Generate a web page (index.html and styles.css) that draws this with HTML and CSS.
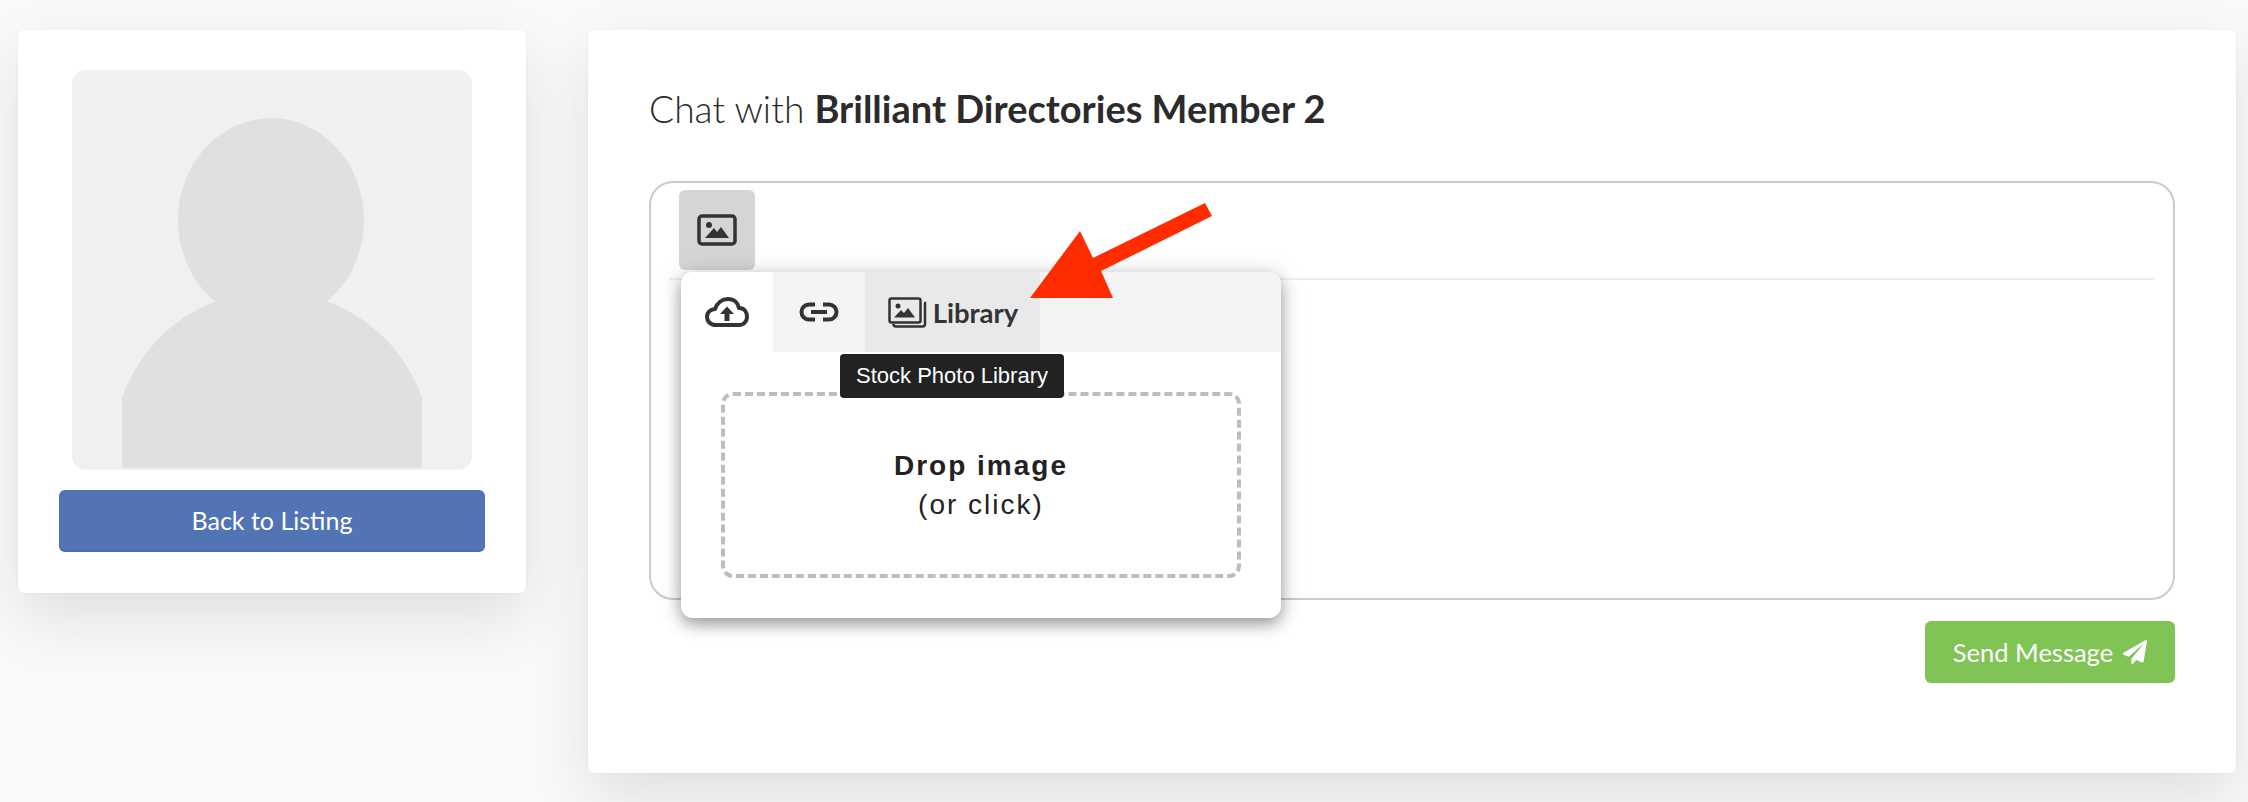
FILE: index.html
```html
<!DOCTYPE html>
<html lang="en">
<head>
    <meta charset="UTF-8">
    <meta name="viewport" content="width=device-width, initial-scale=1.0">
    <title>Chat with Brilliant Directories Member 2</title>
    <link rel="stylesheet" href="styles.css">
</head>
<body>
    <div class="page">
        <aside class="card profile-card">
            <div class="avatar">
                <svg viewBox="0 0 400 400" width="400" height="400">
                    <ellipse cx="199" cy="150" rx="93" ry="102" fill="#e0e0e0"/>
                    <path d="M142 232 A159 159 0 0 0 50 328 V398 H350 V328 A159 159 0 0 0 257 232 Z" fill="#e0e0e0"/>
                </svg>
            </div>
            <a class="back-button" href="#">Back to Listing</a>
        </aside>

        <main class="card chat-card">
            <h1 class="chat-title">Chat with <strong>Brilliant Directories Member 2</strong></h1>

            <div class="editor">
                <div class="editor-toolbar">
                    <button class="tool-button" type="button">
                        <svg viewBox="0 0 40 32" width="40" height="32">
                            <rect x="2" y="2" width="36" height="28" rx="3" fill="none" stroke="#333" stroke-width="3.5"/>
                            <circle cx="12" cy="11" r="3" fill="#333"/>
                            <path d="M8 24 L17 14 L20 18 L24 13 L32 24 Z" fill="#333"/>
                        </svg>
                    </button>
                </div>

                <div class="image-popup">
                    <div class="popup-tabs">
                        <div class="popup-tab tab-upload">
                            <svg viewBox="0 0 44 30" width="44" height="30">
                                <path d="M11 28 C5 28 2 24 2 20 C2 15 6 12 10 12 C12 6 17 2 23 2 C29 2 33 6 34 11 C39 11 42 15 42 20 C42 24 39 28 34 28 Z" fill="none" stroke="#333" stroke-width="4" stroke-linejoin="round"/>
                                <path d="M22 9.5 L29 17 H24.5 V24 H19.5 V17 H15 Z" fill="#333"/>
                            </svg>
                        </div>
                        <div class="popup-tab tab-link">
                            <svg viewBox="0 0 40 20" width="40" height="20">
                                <path d="M16 2.5 H10 a7.5 7.5 0 0 0 0 15 H16 M24 2.5 H30 a7.5 7.5 0 0 1 0 15 H24 M12 10 H28" fill="none" stroke="#333" stroke-width="4"/>
                            </svg>
                        </div>
                        <div class="popup-tab tab-library">
                            <svg viewBox="0 0 39 31" width="39" height="31">
                                <rect x="1.5" y="1.5" width="31" height="24" rx="2" fill="none" stroke="#333" stroke-width="2.5"/>
                                <path d="M36 6 H37 V27 a2.5 2.5 0 0 1 -2.5 2.5 H8 a2.5 2.5 0 0 1 -2.5 -2.5" fill="none" stroke="#333" stroke-width="2.5"/>
                                <circle cx="10" cy="9" r="2.5" fill="#333"/>
                                <path d="M6 20.5 L13 13 L16 16 L20 11 L27 20.5 Z" fill="#333"/>
                            </svg>
                            <span>Library</span>
                        </div>
                    </div>
                    <div class="tooltip">Stock Photo Library</div>
                    <div class="drop-area">
                        <div class="drop-zone">
                            <strong>Drop image</strong>
                            <span>(or click)</span>
                        </div>
                    </div>
                </div>
            </div>

            <div class="chat-actions">
                <button class="send-button" type="button">
                    Send Message
                    <svg viewBox="0 0 512 512" width="24" height="24">
                        <path d="M476 3.2L12.5 270.6c-18.1 10.4-15.8 35.6 2.2 43.2L121 358.4l287.3-253.2c5.5-4.9 13.3 2.6 8.6 8.3L176 407v80.5c0 23.6 28.5 32.9 42.5 15.8L282 426l124.6 52.2c14.2 6 30.4-2.9 33-18.2l72-432C515 7.8 493.3-6.8 476 3.2z" fill="#fff"/>
                    </svg>
                </button>
            </div>
        </main>
    </div>

    <svg class="callout-arrow" viewBox="0 0 2248 802" width="2248" height="802">
        <path d="M1205 203 L1212 216 L1101 271 L1113 298 L1030 298 L1080 231 L1093 258 Z" fill="#ff2c00"/>
    </svg>
</body>
</html>
```

FILE: styles.css
```css
html, body {
    margin: 0;
    padding: 0;
    height: 100%;
    overflow: hidden;
}
body {
    font-family: 'Lato', 'Open Sans', sans-serif;
    background-color: #f9f9f9;
    color: #2b2b2b;
    position: relative;
}
.page {
    display: flex;
    align-items: flex-start;
    gap: 62px;
    padding: 30px 12px 0 18px;
}
.card {
    background-color: #fff;
    border-radius: 6px;
    box-shadow: 0 0 0 1px rgba(0, 0, 0, 0.02), 0 25px 60px rgba(0, 0, 0, 0.1);
}
.profile-card {
    width: 508px;
    height: 563px;
    flex-shrink: 0;
    padding: 40px 41px 0;
    box-sizing: border-box;
}
.avatar {
    width: 400px;
    height: 400px;
    margin: 0 auto;
    background-color: #f0f0f2;
    border-radius: 14px;
    overflow: hidden;
}
.avatar svg {
    display: block;
}
.back-button {
    display: flex;
    justify-content: center;
    align-items: center;
    height: 62px;
    margin-top: 20px;
    box-sizing: border-box;
    background-color: #5274b4;
    border-bottom: 2px solid #4a6cb0;
    border-radius: 6px;
    color: #fff;
    font-size: 25px;
    text-decoration: none;
}
.chat-card {
    width: 1648px;
    height: 743px;
    flex-shrink: 0;
    padding: 53px 61px 0 61px;
    box-sizing: border-box;
}
.chat-title {
    margin: 0 0 47px;
    font-size: 37.2px;
    line-height: 50px;
    font-weight: 300;
}
.chat-title strong {
    font-size: 38px;
    font-weight: 700;
}
.editor {
    position: relative;
    height: 419px;
    box-sizing: border-box;
    border: 2px solid #cbcbcb;
    border-radius: 24px;
    background-color: #fff;
}
.editor-toolbar {
    margin: 0 18px;
    padding: 7px 10px 8px;
    border-bottom: 2px solid #eeeeee;
}
.tool-button {
    display: flex;
    justify-content: center;
    align-items: center;
    width: 76px;
    height: 80px;
    padding: 0;
    border: none;
    border-radius: 6px;
    background-color: #d5d5d5;
}
.image-popup {
    position: absolute;
    left: 30px;
    top: 89px;
    width: 600px;
    height: 346px;
    background-color: #fff;
    border-radius: 12px;
    box-shadow: 0 6px 16px rgba(0, 0, 0, 0.38), 0 0 30px rgba(0, 0, 0, 0.08);
}
.popup-tabs {
    display: flex;
    height: 80px;
    background-color: #f4f4f4;
    border-radius: 12px 12px 0 0;
}
.popup-tab {
    display: flex;
    justify-content: center;
    align-items: center;
    gap: 6px;
    box-sizing: border-box;
}
.tab-upload {
    width: 92px;
    background-color: #fff;
    border-radius: 12px 0 0 0;
}
.tab-link {
    width: 92px;
}
.tab-library {
    width: 175px;
    padding-left: 1px;
    background-color: #e9e9e9;
    font-size: 27.5px;
    font-weight: 700;
    color: #333;
}
.tooltip {
    position: absolute;
    left: 159px;
    top: 82px;
    width: 224px;
    height: 44px;
    z-index: 2;
    display: flex;
    justify-content: center;
    align-items: center;
    background-color: #222;
    border-radius: 4px;
    color: #fff;
    font-family: 'Liberation Sans', Arial, sans-serif;
    font-size: 22px;
}
.drop-area {
    padding: 40px 40px 0;
}
.drop-zone {
    display: flex;
    flex-direction: column;
    justify-content: center;
    align-items: center;
    height: 186px;
    box-sizing: border-box;
    border: 4px dashed #bdbdbd;
    border-radius: 12px;
    font-family: 'Liberation Sans', Arial, sans-serif;
    font-size: 28px;
    line-height: 39px;
    letter-spacing: 2px;
    color: #222;
}
.chat-actions {
    display: flex;
    justify-content: flex-end;
    margin-top: 21px;
}
.send-button {
    display: flex;
    justify-content: center;
    align-items: center;
    gap: 10px;
    width: 250px;
    height: 62px;
    padding: 0;
    border: none;
    border-radius: 6px;
    background-color: #7fc455;
    color: #fff;
    font-family: inherit;
    font-size: 25.5px;
}
.callout-arrow {
    position: absolute;
    left: 0;
    top: 0;
    pointer-events: none;
}
```
